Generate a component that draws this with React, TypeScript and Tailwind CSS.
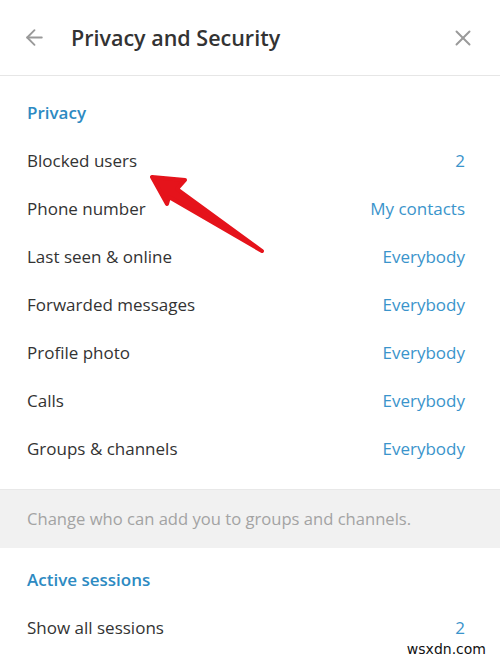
import { ArrowLeft, X } from "lucide-react";

const privacyRows = [
  { label: "Blocked users", value: "2" },
  { label: "Phone number", value: "My contacts" },
  { label: "Last seen & online", value: "Everybody" },
  { label: "Forwarded messages", value: "Everybody" },
  { label: "Profile photo", value: "Everybody" },
  { label: "Calls", value: "Everybody" },
  { label: "Groups & channels", value: "Everybody" },
];

function Row({ label, value }: { label: string; value: string }) {
  return (
    <div className="h-12 flex items-center justify-between pl-[27px] pr-[35px] text-[17px]">
      <span className="text-[#333333]">{label}</span>
      <span className="text-[#3a94cb]">{value}</span>
    </div>
  );
}

function SectionTitle({ children }: { children: string }) {
  return (
    <div className="h-12 flex items-center pl-[27px] text-[17px] font-semibold text-[#2d8ac2]">
      {children}
    </div>
  );
}

export default function App() {
  return (
    <div
      className="relative w-[500px] h-[659px] bg-white overflow-hidden"
      style={{ fontFamily: '"Open Sans", "Noto Sans", sans-serif' }}
    >
      {/* header */}
      <div className="h-[76px] flex items-center border-b border-[#e6e6e6] pl-[22px] pr-[24px]">
        <ArrowLeft className="w-[25px] h-[25px] text-[#999999]" strokeWidth={1.8} />
        <h1 className="ml-[24px] mt-[2px] text-[21.5px] font-semibold text-[#333333]">
          Privacy and Security
        </h1>
        <X className="ml-auto w-[26px] h-[26px] text-[#9a9a9a]" strokeWidth={1.8} />
      </div>

      <div className="pt-[13px] pb-[16px]">
        <SectionTitle>Privacy</SectionTitle>
        {privacyRows.map((r) => (
          <Row key={r.label} label={r.label} value={r.value} />
        ))}
      </div>

      {/* hint band */}
      <div className="h-[59px] flex items-center bg-[#f1f1f1] border-t border-[#e8e8e8] pl-[27px] text-[16.6px] text-[#a3a3a3]">
        Change who can add you to groups and channels.
      </div>

      <div className="pt-[8px]">
        <SectionTitle>Active sessions</SectionTitle>
        <Row label="Show all sessions" value="2" />
      </div>

      {/* red pointer arrow */}
      <svg className="absolute left-0 top-0 pointer-events-none" width="500" height="659">
        <polygon
          points="152,177 185,180 177,189 262,251 169,197 167,204"
          fill="#e5131b"
          stroke="#e5131b"
          strokeWidth="4"
          strokeLinejoin="round"
        />
      </svg>

      <div
        className="absolute right-[12px] bottom-[3px] leading-none text-[14px] text-[#111111] bg-white/80 px-[2px]"
        style={{ fontFamily: '"DejaVu Sans", sans-serif' }}
      >
        wsxdn.com
      </div>
    </div>
  );
}
